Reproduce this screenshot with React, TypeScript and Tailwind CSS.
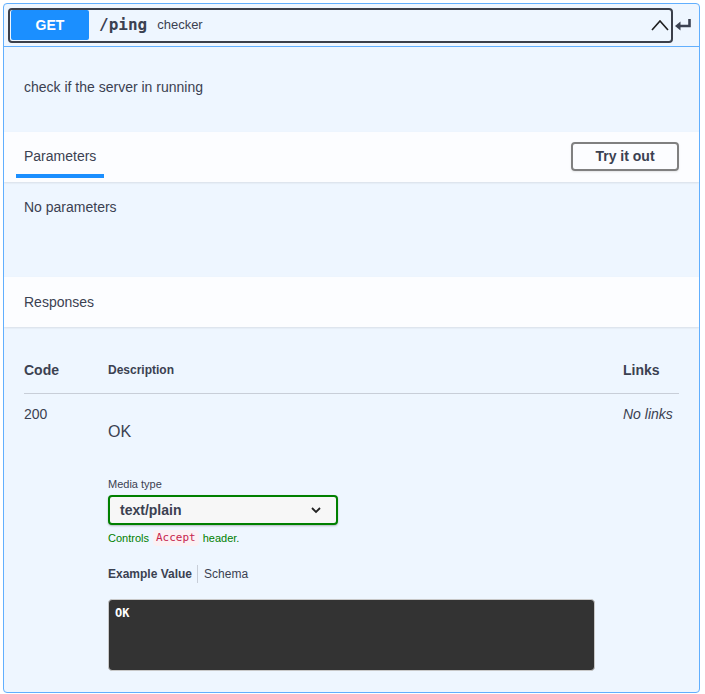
const sans = { fontFamily: '"Liberation Sans", Arial, sans-serif' }
const mono = { fontFamily: '"DejaVu Sans Mono", "Liberation Mono", monospace' }

function ChevronUp() {
  return (
    <svg width="20" height="20" viewBox="0 0 20 20" className="text-[#1f1f1f]">
      <path d="M2 15 L10 6 L18 15" fill="none" stroke="currentColor" strokeWidth="1.6" />
    </svg>
  )
}

function ReturnArrow() {
  return (
    <svg width="18" height="14" viewBox="0 0 18 14" className="text-[#3b4151]">
      <path d="M15.5 1 V8 H5" fill="none" stroke="currentColor" strokeWidth="2.6" />
      <path d="M1 8 L6.5 3.5 V12.5 Z" fill="currentColor" />
    </svg>
  )
}

function ChevronDown() {
  return (
    <svg width="12" height="12" viewBox="0 0 12 12" className="text-[#222]">
      <path d="M2 4 L6 8 L10 4" fill="none" stroke="currentColor" strokeWidth="1.8" />
    </svg>
  )
}

export default function App() {
  return (
    <div className="min-h-[694px] bg-white pl-[3px] pt-[3px] text-[#3b4151]" style={sans}>
      <div className="w-[697px] overflow-hidden rounded-[4px] border border-[#61affe] bg-[#eef6ff]">
        {/* summary */}
        <div className="flex h-[43px] items-center border-b border-[#61affe] pl-[4px]">
          <div className="flex h-[35px] w-[665px] items-center rounded-[4px] border-2 border-[#3b3f4a] p-[1px]">
            <div className="flex h-[30px] w-[78px] items-center justify-center rounded-[2px] bg-[#1b8fff] text-[14px] font-bold text-white">
              GET
            </div>
            <span className="ml-[10px] text-[16px] font-bold text-[#3b4151]" style={mono}>
              /ping
            </span>
            <span className="ml-[10px] text-[13px] text-[#3b4151]">checker</span>
            <div className="ml-auto flex items-center">
              <ChevronUp />
            </div>
          </div>
          <div className="ml-[1px] flex items-center">
            <ReturnArrow />
          </div>
        </div>

        {/* description */}
        <div className="h-[85px] px-[20px] pt-[30px] text-[14px] leading-[20px]">
          check if the server in running
        </div>

        {/* parameters header */}
        <div className="flex h-[50px] items-center justify-between bg-[#fcfdff] px-[20px] shadow-[0_1px_2px_rgba(0,0,0,0.1)]">
          <div className="relative -ml-[8px] flex h-full items-center px-[8px] pb-[2px] text-[14px]">
            Parameters
            <div className="absolute bottom-[4px] left-0 right-0 h-[4px] bg-[#1b8fff]" />
          </div>
          <button className="-mt-[1px] h-[29px] w-[108px] rounded-[4px] border-2 border-[#808080] bg-transparent text-[14px] font-bold text-[#3b4151] shadow-[0_1px_2px_rgba(0,0,0,0.1)]">
            Try it out
          </button>
        </div>

        {/* parameters body */}
        <div className="h-[95px] px-[20px] pt-[15px] text-[14px] leading-[20px]">No parameters</div>

        {/* responses header */}
        <div className="flex h-[50px] items-center bg-[#fcfdff] px-[20px] text-[14px] shadow-[0_1px_2px_rgba(0,0,0,0.1)]">
          Responses
        </div>

        {/* responses body */}
        <div className="px-[20px] pb-[21px] pt-[33px]">
          <div className="flex h-[34px] items-start border-b border-[#c8ced8] leading-[20px]">
            <div className="w-[84px] text-[14px] font-bold">Code</div>
            <div className="flex-1 text-[12px] font-bold">Description</div>
            <div className="w-[56px] text-[14px] font-bold">Links</div>
          </div>
          <div className="flex pt-[12px]">
            <div className="w-[84px] text-[14px] leading-[16px]">200</div>
            <div className="flex-1">
              <div className="pt-[17px] text-[16px] leading-[18px]">OK</div>
              <div className="mt-[37px] text-[11px] leading-[12px]">Media type</div>
              <div className="mt-[5px] flex h-[30px] w-[230px] items-center justify-between rounded-[4px] border-2 border-[#008000] bg-[#f7f7f7] pl-[10px] pr-[14px] text-[14px] font-bold shadow-[0_1px_2px_rgba(0,0,0,0.25)]">
                text/plain
                <ChevronDown />
              </div>
              <div className="mt-[5px] flex items-center text-[11px] leading-[16px] text-[#008000]">
                Controls
                <span className="mx-[4px] rounded-[4px] bg-[#fbf1f4] px-[3px] text-[11px] text-[#c7254e]" style={mono}>
                  Accept
                </span>
                header.
              </div>
              <div className="mt-[19px] flex items-center text-[12px] leading-[18px]">
                <span className="pr-[5px] font-bold">Example Value</span>
                <span className="border-l border-[#c8ced8] pl-[6px]">Schema</span>
              </div>
              <div className="mt-[16px] h-[72px] w-[487px] rounded-[4px] border border-[#c8c8c8] bg-[#333333] px-[6px] pt-[6px] text-[12px] font-bold leading-[15px] text-white" style={mono}>
                OK
              </div>
            </div>
            <div className="w-[56px] text-[14px] italic leading-[16px]">No links</div>
          </div>
        </div>
      </div>
    </div>
  )
}
